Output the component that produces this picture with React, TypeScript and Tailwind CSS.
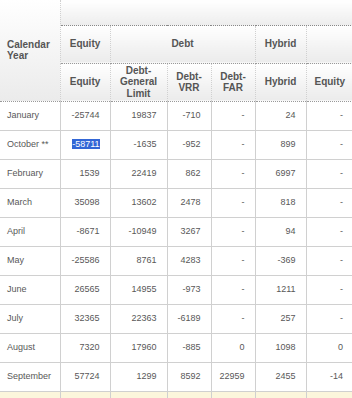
import React from "react";

type Row = { month: string; values: string[]; selected?: boolean };

const rows: Row[] = [
  { month: "January", values: ["-25744", "19837", "-710", "-", "24", "-"] },
  { month: "October **", values: ["-58711", "-1635", "-952", "-", "899", "-"], selected: true },
  { month: "February", values: ["1539", "22419", "862", "-", "6997", "-"] },
  { month: "March", values: ["35098", "13602", "2478", "-", "818", "-"] },
  { month: "April", values: ["-8671", "-10949", "3267", "-", "94", "-"] },
  { month: "May", values: ["-25586", "8761", "4283", "-", "-369", "-"] },
  { month: "June", values: ["26565", "14955", "-973", "-", "1211", "-"] },
  { month: "July", values: ["32365", "22363", "-6189", "-", "257", "-"] },
  { month: "August", values: ["7320", "17960", "-885", "0", "1098", "0"] },
  { month: "September", values: ["57724", "1299", "8592", "22959", "2455", "-14"] },
];

const head =
  "bg-gradient-to-b from-white to-[#ebebeb] font-bold text-[10px] text-[#555] text-center align-middle leading-[11.5px]";
const line = "border-r border-r-[#d0d0d0] border-b border-b-[#999] border-dotted";

export default function App() {
  return (
    <div className="w-[352px] h-[398px] overflow-hidden bg-white font-['Liberation_Sans',Arial,sans-serif] text-[9px] text-[#585858]">
      <table className="table-fixed border-collapse w-[353px]">
        <colgroup>
          <col className="w-[60px]" />
          <col className="w-[50px]" />
          <col className="w-[57px]" />
          <col className="w-[44px]" />
          <col className="w-[44px]" />
          <col className="w-[51px]" />
          <col className="w-[47px]" />
        </colgroup>
        <thead>
          <tr className="h-[25px]">
            <th rowSpan={3} className={`${head} text-left pl-[7px] ${line}`}>
              Calendar
              <br />
              Year
            </th>
            <th colSpan={6} className="bg-gradient-to-b from-white to-[#ededed] border-b border-dotted border-b-[#888]" />
          </tr>
          <tr className="h-[38px]">
            <th className={`${head} ${line}`}>Equity</th>
            <th colSpan={3} className={`${head} ${line}`}>Debt</th>
            <th className={`${head} ${line}`}>Hybrid</th>
            <th className={`${head} border-b border-b-[#999] border-dotted`}></th>
          </tr>
          <tr className="h-[38px]">
            <th className={`${head} ${line}`}>Equity</th>
            <th className={`${head} ${line}`}>
              Debt-
              <br />
              General
              <br />
              Limit
            </th>
            <th className={`${head} ${line}`}>
              Debt-
              <br />
              VRR
            </th>
            <th className={`${head} ${line}`}>
              Debt-
              <br />
              FAR
            </th>
            <th className={`${head} ${line}`}>Hybrid</th>
            <th className={`${head} border-b border-b-[#999] border-dotted`}>Equity</th>
          </tr>
        </thead>
        <tbody>
          {rows.map((r) => (
            <tr key={r.month} className="h-[29px]">
              <td className="pl-[7px] border-r border-b border-[#d0d0d0] whitespace-nowrap">{r.month}</td>
              {r.values.map((v, i) => (
                <td
                  key={i}
                  className={`text-right pr-[10px] border-b border-[#d0d0d0] ${i < 5 ? "border-r" : ""}`}
                >
                  {r.selected && i === 0 ? <span className="bg-[#3367d6] text-white">{v}</span> : v}
                </td>
              ))}
            </tr>
          ))}
          <tr className="h-[29px] bg-[#fcf6dc]">
            <td className="border-r border-[#d0d0d0]" />
            {[0, 1, 2, 3, 4].map((i) => (
              <td key={i} className="border-r border-[#d0d0d0]" />
            ))}
            <td />
          </tr>
        </tbody>
      </table>
    </div>
  );
}
